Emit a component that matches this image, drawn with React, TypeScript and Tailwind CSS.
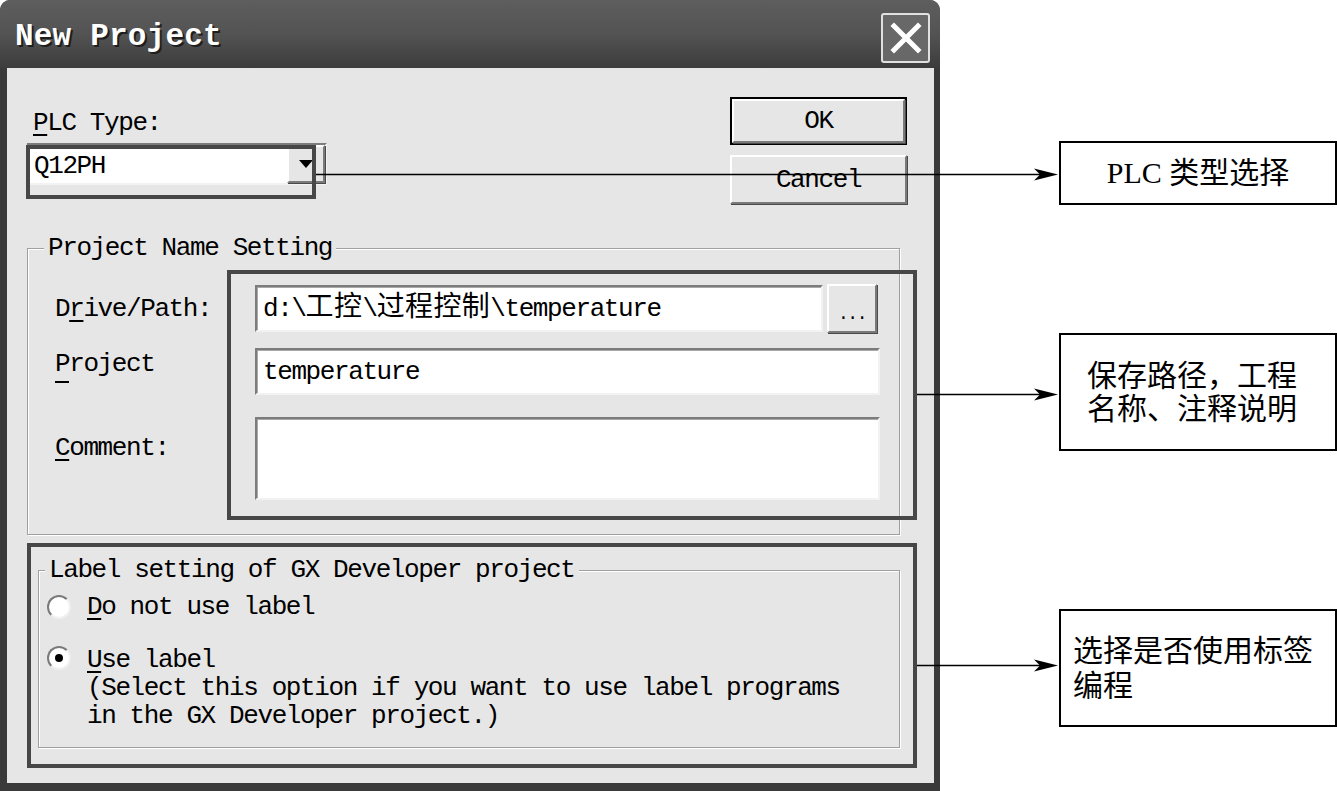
import React from 'react';

const MONO =
  "font-['Liberation_Mono','Noto_Sans_CJK_SC',monospace] text-[26px] tracking-[-1.4px] leading-[28px] text-black";
const SUNKEN =
  'bg-white border-2 border-t-[#7c7c7c] border-l-[#7c7c7c] border-b-[#f2f2f2] border-r-[#f2f2f2] shadow-[inset_1px_1px_0_#a8a8a8]';
const RAISED =
  'bg-[#e6e6e6] border-2 border-t-white border-l-white border-b-[#7a7a7a] border-r-[#7a7a7a] shadow-[1px_1px_0_#4a4a4a]';
const GROUP =
  'relative border border-[#a0a0a0] shadow-[inset_1px_1px_0_#ffffff,1px_1px_0_#ffffff]';

// access-key letter
function U({ children }: { children: React.ReactNode }) {
  return <span className="underline underline-offset-[4px] decoration-[2px]">{children}</span>;
}

// wide (double-width) Chinese glyphs in the path field
function Cjk({ children }: { children: React.ReactNode }) {
  return <span className="text-[28px] tracking-[0.4px]">{children}</span>;
}

function Radio({ checked }: { checked?: boolean }) {
  return (
    <div className="w-[24px] h-[24px] shrink-0 rounded-full bg-white border-2 border-t-[#7a7a7a] border-l-[#7a7a7a] border-b-[#f0f0f0] border-r-[#f0f0f0] flex items-center justify-center">
      {checked && <div className="w-[8px] h-[8px] rounded-full bg-black" />}
    </div>
  );
}

function Dialog() {
  return (
    <div className="w-[940px] h-[791px] shrink-0 flex flex-col rounded-t-[10px] overflow-hidden bg-[#3a3a3a]">
      {/* Title bar */}
      <div className="h-[68px] shrink-0 flex justify-between pl-[15px] pr-[10px] bg-linear-to-b from-[#5e5e5e] via-[#535353] to-[#3c3c3c]">
        <div className="self-center mt-[6px] font-['Liberation_Mono',monospace] font-bold text-[31px] tracking-[0.2px] text-white [text-shadow:2px_2px_0_#1e1e1e]">
          New Project
        </div>
        <div className="mt-[13px] w-[49px] h-[50px] rounded-[3px] border-2 border-[#e0e0e0] bg-[#686868] flex items-center justify-center">
          <svg width="34" height="34" viewBox="0 0 34 34">
            <path d="M5 5 L29 29 M29 5 L5 29" stroke="#ffffff" strokeWidth="5" strokeLinecap="square" />
          </svg>
        </div>
      </div>

      {/* Client area */}
      <div className={`flex-1 ml-[7px] mr-[6px] mb-[8px] bg-[#e6e6e6] pl-[20px] pr-[34px] pt-[29px] flex flex-col ${MONO}`}>
        <div className="flex justify-between items-start">
          <div className="mt-[12px] flex flex-col">
            <div className="ml-[6px]">
              <U>P</U>LC Type:
            </div>
            <div className={`mt-[6px] w-[300px] h-[42px] flex ${SUNKEN}`}>
              <div className="flex-1 pl-[5px] pt-[3px] flex items-center">Q12PH</div>
              <div className={`w-[38px] flex items-center justify-center ${RAISED}`}>
                <svg width="14" height="8" viewBox="0 0 14 8">
                  <path d="M0 0 H14 L7 8 Z" fill="#000000" />
                </svg>
              </div>
            </div>
          </div>

          <div className="-mr-[7px] flex flex-col gap-[10px]">
            <div className="w-[177px] h-[48px] border-2 border-black flex">
              <div className={`flex-1 flex items-center justify-center ${RAISED}`}>OK</div>
            </div>
            <div className={`w-[177px] h-[49px] flex items-center justify-center ${RAISED}`}>Cancel</div>
          </div>
        </div>

        {/* Project Name Setting */}
        <div className={`mt-[44px] h-[287px] ${GROUP}`}>
          <div className="absolute left-[16px] top-[-15px] px-[4px] bg-[#e6e6e6]">Project Name Setting</div>
          <div className="pt-[35px] pl-[27px] pr-[19px] flex flex-col">
            <div className="flex items-center h-[49px]">
              <div className="w-[200px] shrink-0">
                D<U>r</U>ive/Path:
              </div>
              <div className={`w-[568px] h-[47px] pl-[6px] flex items-center whitespace-nowrap ${SUNKEN}`}>
                d:{'\\'}
                <Cjk>工控</Cjk>
                {'\\'}
                <Cjk>过程控制</Cjk>
                {'\\'}temperature
              </div>
              <div className={`ml-[4px] w-[50px] h-[49px] flex items-end justify-center pb-[8px] text-[18px] leading-[18px] ${RAISED}`}>
                ...
              </div>
            </div>

            <div className="mt-[15px] flex items-start">
              <div className="w-[200px] shrink-0 pt-[2px] flex flex-col">
                <span>Project</span>
                <div className="mt-[3px] w-[14px] h-[2px] bg-black" />
              </div>
              <div className={`w-[625px] h-[47px] pl-[6px] flex items-center ${SUNKEN}`}>temperature</div>
            </div>

            <div className="mt-[22px] flex items-start">
              <div className="w-[200px] shrink-0 pt-[17px]">
                <U>C</U>omment:
              </div>
              <div className={`w-[625px] h-[83px] ${SUNKEN}`} />
            </div>
          </div>
        </div>

        {/* Label setting */}
        <div className={`mt-[35px] ml-[11px] h-[178px] ${GROUP}`}>
          <div className="absolute left-[6px] top-[-15px] px-[4px] bg-[#e6e6e6]">
            Label setting of GX Developer project
          </div>
          <div className="pt-[22px] pl-[8px] flex flex-col">
            <div className="flex items-center gap-[16px]">
              <Radio />
              <div>
                <U>D</U>o not use label
              </div>
            </div>
            <div className="mt-[25px] flex items-start gap-[16px]">
              <Radio checked />
              <div className="flex flex-col">
                <div>
                  <U>U</U>se label
                </div>
                <div className="whitespace-pre">(Select this option if you want to use label programs</div>
                <div className="whitespace-pre">in the GX Developer project.)</div>
              </div>
            </div>
          </div>
        </div>
      </div>
    </div>
  );
}

export default function App() {
  return (
    <div className="relative w-[1337px] h-[791px] bg-white flex overflow-hidden">
      <Dialog />

      {/* Callout boxes */}
      <div className="ml-[119px] w-[278px] flex flex-col font-['Liberation_Serif','Noto_Sans_CJK_SC',serif] text-[30px] text-black">
        <div className="mt-[141px] h-[64px] border-2 border-black flex items-center justify-center leading-[32px]">
          PLC 类型选择
        </div>
        <div className="mt-[128px] h-[118px] border-2 border-black pl-[26px] pt-[24px] leading-[33px]">
          <div>保存路径，工程</div>
          <div>名称、注释说明</div>
        </div>
        <div className="mt-[158px] h-[118px] border-2 border-black pl-[12px] pt-[22px] leading-[35px]">
          <div>选择是否使用标签</div>
          <div>编程</div>
        </div>
      </div>

      {/* Highlight frames and leader arrows */}
      <svg className="absolute inset-0 pointer-events-none" width="1337" height="791" viewBox="0 0 1337 791">
        <g fill="none" stroke="#474747" strokeWidth="4">
          <rect x="28" y="147" width="286" height="50" />
          <rect x="229" y="272" width="686" height="246" />
          <rect x="29" y="545" width="886" height="221" />
        </g>
        <g stroke="#000000" strokeWidth="1.6">
          <line x1="316" y1="174.5" x2="1042" y2="174.5" />
          <line x1="917" y1="394.5" x2="1042" y2="394.5" />
          <line x1="917" y1="665.5" x2="1042" y2="665.5" />
        </g>
        <g fill="#000000">
          <path d="M1058 174.5 L1034 168.5 L1040 174.5 L1034 180.5 Z" />
          <path d="M1058 394.5 L1034 388.5 L1040 394.5 L1034 400.5 Z" />
          <path d="M1058 665.5 L1034 659.5 L1040 665.5 L1034 671.5 Z" />
        </g>
      </svg>
    </div>
  );
}
